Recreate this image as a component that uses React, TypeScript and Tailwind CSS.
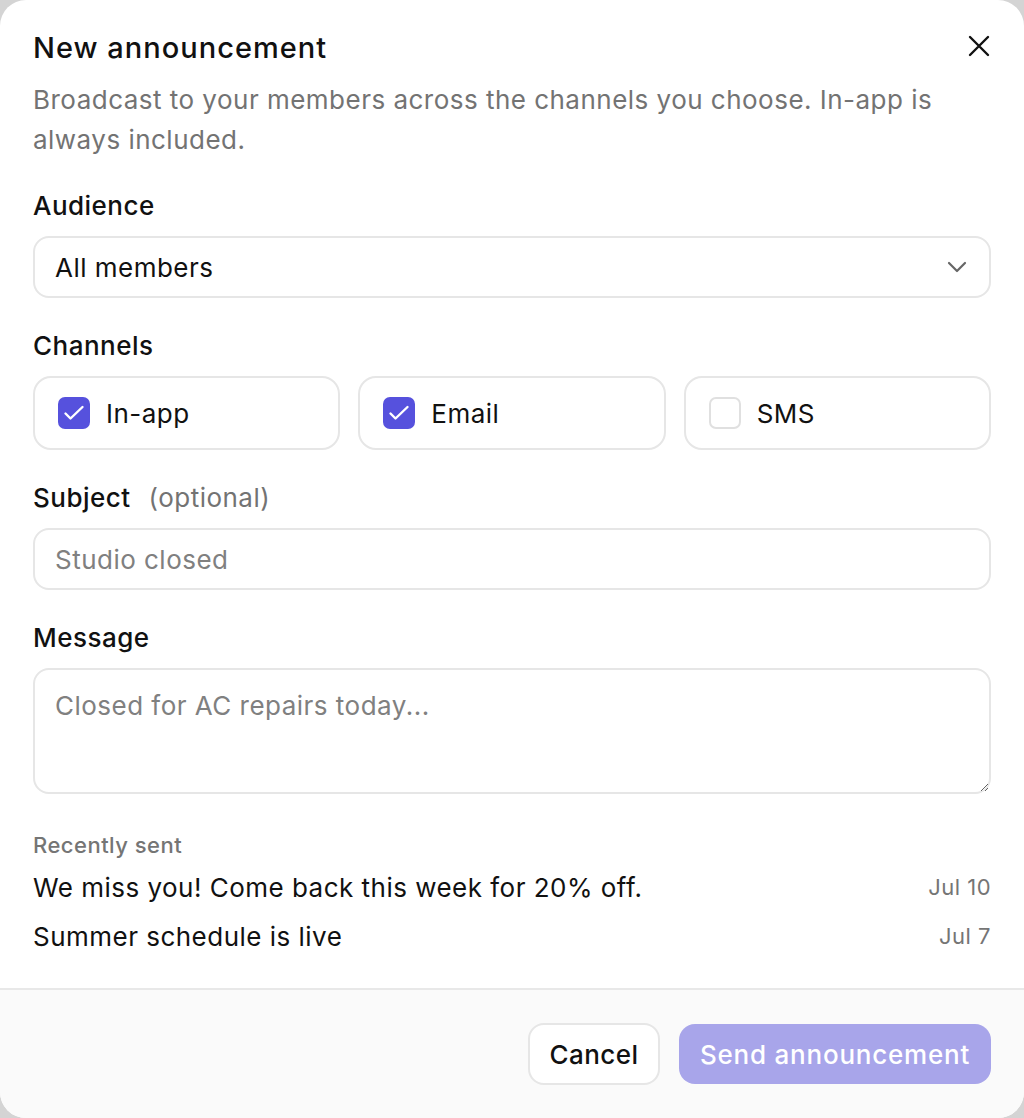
import { useState } from 'react';

const font = { fontFamily: 'Inter, "Noto Sans", sans-serif' };

type ChannelKey = 'inapp' | 'email' | 'sms';

const channels: { key: ChannelKey; label: string }[] = [
  { key: 'inapp', label: 'In-app' },
  { key: 'email', label: 'Email' },
  { key: 'sms', label: 'SMS' },
];

const recent = [
  { title: 'We miss you! Come back this week for 20% off.', date: 'Jul 10' },
  { title: 'Summer schedule is live', date: 'Jul 7' },
];

function CheckBox({ checked }: { checked: boolean }) {
  if (!checked) {
    return <span className="w-[32px] h-[32px] rounded-[7px] border-2 border-[#e0e0e0] bg-white shrink-0" />;
  }
  return (
    <span className="w-[32px] h-[32px] rounded-[7px] bg-[#5651dd] flex items-center justify-center shrink-0">
      <svg width="32" height="32" viewBox="0 0 32 32" fill="none">
        <path d="M7.5 16.5l5 5L24.5 10" stroke="white" strokeWidth="2.4" strokeLinecap="round" strokeLinejoin="round" />
      </svg>
    </span>
  );
}

export default function App() {
  const [selected, setSelected] = useState<Record<ChannelKey, boolean>>({
    inapp: true,
    email: true,
    sms: false,
  });

  return (
    <div className="w-[1024px] h-[1118px] bg-[#d4d4d4] tracking-[0.03em]" style={font}>
      <div className="w-full h-full bg-white rounded-[26px] flex flex-col overflow-hidden">
        <div className="flex-1 px-[33px] pt-[28px]">
          {/* Header */}
          <div className="flex items-start justify-between">
            <h2 className="text-[29px] leading-[40px] font-medium tracking-[0.035em] text-[#111]">New announcement</h2>
            <button className="mt-[2px] -mr-[4px] w-[32px] h-[32px] flex items-center justify-center text-[#111]">
              <svg width="24" height="24" viewBox="0 0 24 24" fill="none">
                <path d="M3 3l18 18M21 3L3 21" stroke="currentColor" strokeWidth="2.4" strokeLinecap="round" />
              </svg>
            </button>
          </div>
          <p className="mt-[12px] text-[26px] leading-[40px] text-[#737373]">
            Broadcast to your members across the channels you choose. In-app is always included.
          </p>

          {/* Audience */}
          <div className="mt-[28px] text-[26px] leading-[36px] font-medium text-[#111]">Audience</div>
          <div className="mt-[12px] h-[62px] rounded-[16px] border-2 border-[#e6e6e6] flex items-center justify-between pl-[20px] pr-[22px]">
            <span className="text-[26px] text-[#111]">All members</span>
            <svg width="20" height="12" viewBox="0 0 20 12" fill="none">
              <path d="M2 2l8 8 8-8" stroke="#666" strokeWidth="2.2" strokeLinecap="round" strokeLinejoin="round" />
            </svg>
          </div>

          {/* Channels */}
          <div className="mt-[30px] text-[26px] leading-[36px] font-medium text-[#111]">Channels</div>
          <div className="mt-[12px] grid grid-cols-3 gap-[18px]">
            {channels.map((c) => (
              <button
                key={c.key}
                onClick={() => c.key !== 'inapp' && setSelected({ ...selected, [c.key]: !selected[c.key] })}
                className="h-[74px] rounded-[18px] border-2 border-[#e6e6e6] flex items-center gap-[16px] pl-[23px] text-left"
              >
                <CheckBox checked={selected[c.key]} />
                <span className="text-[26px] text-[#111]">{c.label}</span>
              </button>
            ))}
          </div>

          {/* Subject */}
          <div className="mt-[30px] text-[26px] leading-[36px] text-[#111]">
            <span className="font-medium">Subject</span>
            <span className="ml-[18px] text-[#737373]">(optional)</span>
          </div>
          <input
            placeholder="Studio closed"
            className="mt-[12px] w-full h-[62px] rounded-[16px] border-2 border-[#e6e6e6] px-[20px] text-[26px] text-[#111] placeholder:text-[#808080] outline-none"
          />

          {/* Message */}
          <div className="mt-[30px] text-[26px] leading-[36px] font-medium text-[#111]">Message</div>
          <textarea
            placeholder="Closed for AC repairs today..."
            className="mt-[12px] block w-full h-[126px] rounded-[16px] border-2 border-[#e6e6e6] px-[20px] py-[18px] text-[26px] leading-[36px] text-[#111] placeholder:text-[#808080] outline-none resize-y"
          />

          {/* Recently sent */}
          <div className="mt-[36px] text-[22px] leading-[30px] font-medium text-[#757575]">Recently sent</div>
          <div className="mt-[9px] flex flex-col gap-[13px]">
            {recent.map((r) => (
              <div key={r.title} className="flex items-center justify-between h-[36px]">
                <span className="text-[26px] text-[#111]">{r.title}</span>
                <span className="text-[22px] text-[#757575]">{r.date}</span>
              </div>
            ))}
          </div>
        </div>

        {/* Footer */}
        <div className="h-[130px] shrink-0 border-t-2 border-[#e8e8e8] bg-[#fafafa] flex items-center justify-end gap-[19px] px-[33px]">
          <button className="h-[62px] w-[132px] rounded-[16px] border-2 border-[#e6e6e6] bg-white text-[26px] font-medium text-[#111]">
            Cancel
          </button>
          <button
            disabled
            className="h-[60px] w-[312px] rounded-[16px] bg-[#a8a5ea] text-[26px] font-medium tracking-[0.03em] text-white"
          >
            Send announcement
          </button>
        </div>
      </div>
    </div>
  );
}
